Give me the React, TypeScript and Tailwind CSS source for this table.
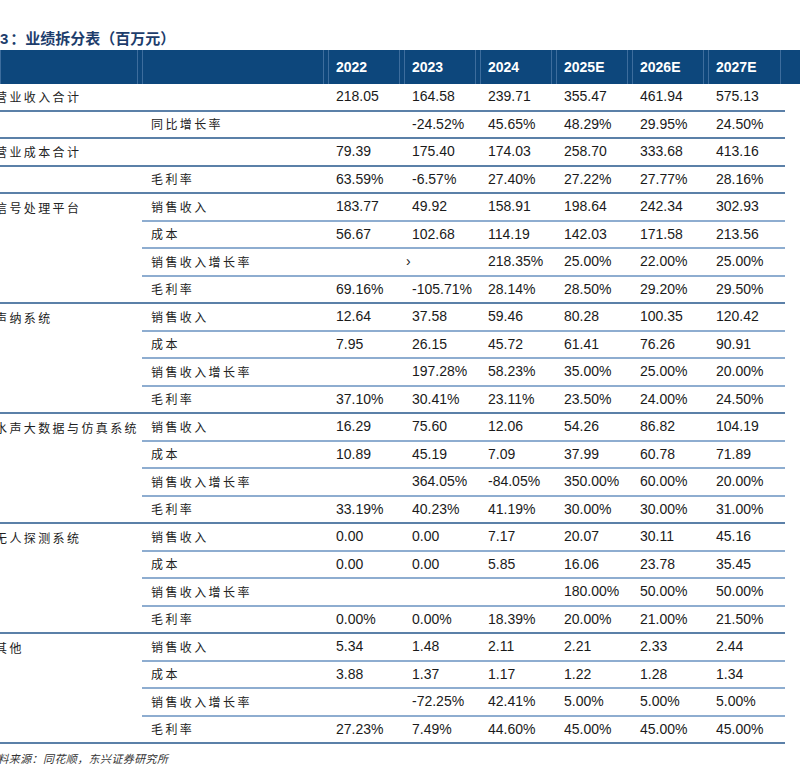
type Row = { sub: string; vals: string[] };
type Group = { cat: string; rows: Row[] };

const YEARS = ["2022", "2023", "2024", "2025E", "2026E", "2027E"];

const GROUPS: Group[] = [
  { cat: "营业收入合计", rows: [{ sub: "", vals: ["218.05", "164.58", "239.71", "355.47", "461.94", "575.13"] }] },
  { cat: "", rows: [{ sub: "同比增长率", vals: ["", "-24.52%", "45.65%", "48.29%", "29.95%", "24.50%"] }] },
  { cat: "营业成本合计", rows: [{ sub: "", vals: ["79.39", "175.40", "174.03", "258.70", "333.68", "413.16"] }] },
  { cat: "", rows: [{ sub: "毛利率", vals: ["63.59%", "-6.57%", "27.40%", "27.22%", "27.77%", "28.16%"] }] },
  {
    cat: "信号处理平台",
    rows: [
      { sub: "销售收入", vals: ["183.77", "49.92", "158.91", "198.64", "242.34", "302.93"] },
      { sub: "成本", vals: ["56.67", "102.68", "114.19", "142.03", "171.58", "213.56"] },
      { sub: "销售收入增长率", vals: ["", "›", "218.35%", "25.00%", "22.00%", "25.00%"] },
      { sub: "毛利率", vals: ["69.16%", "-105.71%", "28.14%", "28.50%", "29.20%", "29.50%"] },
    ],
  },
  {
    cat: "声纳系统",
    rows: [
      { sub: "销售收入", vals: ["12.64", "37.58", "59.46", "80.28", "100.35", "120.42"] },
      { sub: "成本", vals: ["7.95", "26.15", "45.72", "61.41", "76.26", "90.91"] },
      { sub: "销售收入增长率", vals: ["", "197.28%", "58.23%", "35.00%", "25.00%", "20.00%"] },
      { sub: "毛利率", vals: ["37.10%", "30.41%", "23.11%", "23.50%", "24.00%", "24.50%"] },
    ],
  },
  {
    cat: "水声大数据与仿真系统",
    rows: [
      { sub: "销售收入", vals: ["16.29", "75.60", "12.06", "54.26", "86.82", "104.19"] },
      { sub: "成本", vals: ["10.89", "45.19", "7.09", "37.99", "60.78", "71.89"] },
      { sub: "销售收入增长率", vals: ["", "364.05%", "-84.05%", "350.00%", "60.00%", "20.00%"] },
      { sub: "毛利率", vals: ["33.19%", "40.23%", "41.19%", "30.00%", "30.00%", "31.00%"] },
    ],
  },
  {
    cat: "无人探测系统",
    rows: [
      { sub: "销售收入", vals: ["0.00", "0.00", "7.17", "20.07", "30.11", "45.16"] },
      { sub: "成本", vals: ["0.00", "0.00", "5.85", "16.06", "23.78", "35.45"] },
      { sub: "销售收入增长率", vals: ["", "", "", "180.00%", "50.00%", "50.00%"] },
      { sub: "毛利率", vals: ["0.00%", "0.00%", "18.39%", "20.00%", "21.00%", "21.50%"] },
    ],
  },
  {
    cat: "其他",
    rows: [
      { sub: "销售收入", vals: ["5.34", "1.48", "2.11", "2.21", "2.33", "2.44"] },
      { sub: "成本", vals: ["3.88", "1.37", "1.17", "1.22", "1.28", "1.34"] },
      { sub: "销售收入增长率", vals: ["", "-72.25%", "42.41%", "5.00%", "5.00%", "5.00%"] },
      { sub: "毛利率", vals: ["27.23%", "7.49%", "44.60%", "45.00%", "45.00%", "45.00%"] },
    ],
  },
];

const GRID = "grid grid-cols-[142px_186px_76px_76px_76px_76px_76px_77px]";
const CJK = "font-['Noto_Sans_CJK_SC',sans-serif] text-[12px] tracking-[2.4px] text-[#222]";
const NUM = "font-['Liberation_Sans',Arial,sans-serif] text-[14px] text-[#1a1a1a]";

function HeadCell({ children }: { children?: React.ReactNode }) {
  return (
    <div className="flex h-full border-l border-[#3d6d9d]">
      <div className="mr-[4px] flex flex-1 items-center border-r border-[#3d6d9d] pl-[7px]">{children}</div>
    </div>
  );
}

function DataRow({ row, cat, last }: { row: Row; cat: string; last: boolean }) {
  const line = last ? "border-[#5b80a8]" : "border-[#8eadd0]";
  return (
    <div className={`${GRID} h-[27.5px]`}>
      <div className={`flex items-center whitespace-nowrap ${last ? `border-b-2 ${line}` : ""}`}>
        {cat && <span className={`${CJK} -ml-[5px]`}>{cat}</span>}
      </div>
      <div className={`flex items-center border-b-2 pl-[9px] ${line}`}>
        <span className={`${CJK} whitespace-nowrap`}>{row.sub}</span>
      </div>
      {row.vals.map((v, i) => (
        <div key={i} className={`flex items-center border-b-2 pl-[8px] ${line}`}>
          {v === "›" ? (
            <span className={`${NUM} -ml-[6px] text-[11px]`}>›</span>
          ) : (
            <span className={NUM}>{v}</span>
          )}
        </div>
      ))}
    </div>
  );
}

export default function App() {
  return (
    <div className="h-[769px] w-[800px] overflow-hidden bg-white pt-[27px]">
      <div className="flex h-[23px] items-center whitespace-nowrap font-['Liberation_Sans','Noto_Sans_CJK_SC',sans-serif] text-[15px] font-bold leading-[23px] text-[#1d3d6c]">
        <span>3</span>
        <span className="ml-[2px]">：</span>
        <span>业绩拆分表（百万元）</span>
      </div>
      <div className={`${GRID} h-[34px] bg-[#0d477c]`}>
        <HeadCell />
        <HeadCell />
        {YEARS.map((y) => (
          <HeadCell key={y}>
            <span className="font-['Liberation_Sans',Arial,sans-serif] text-[14px] font-bold text-white">{y}</span>
          </HeadCell>
        ))}
      </div>
      {GROUPS.map((g, gi) =>
        g.rows.map((r, ri) => (
          <DataRow key={`${gi}-${ri}`} row={r} cat={ri === 0 ? g.cat : ""} last={ri === g.rows.length - 1} />
        )),
      )}
      <div className="-ml-[14px] mt-[6px] whitespace-nowrap font-['Noto_Sans_CJK_SC',sans-serif] text-[11px] italic tracking-[0.4px] text-[#333]">
        资料来源：同花顺，东兴证券研究所
      </div>
    </div>
  );
}
